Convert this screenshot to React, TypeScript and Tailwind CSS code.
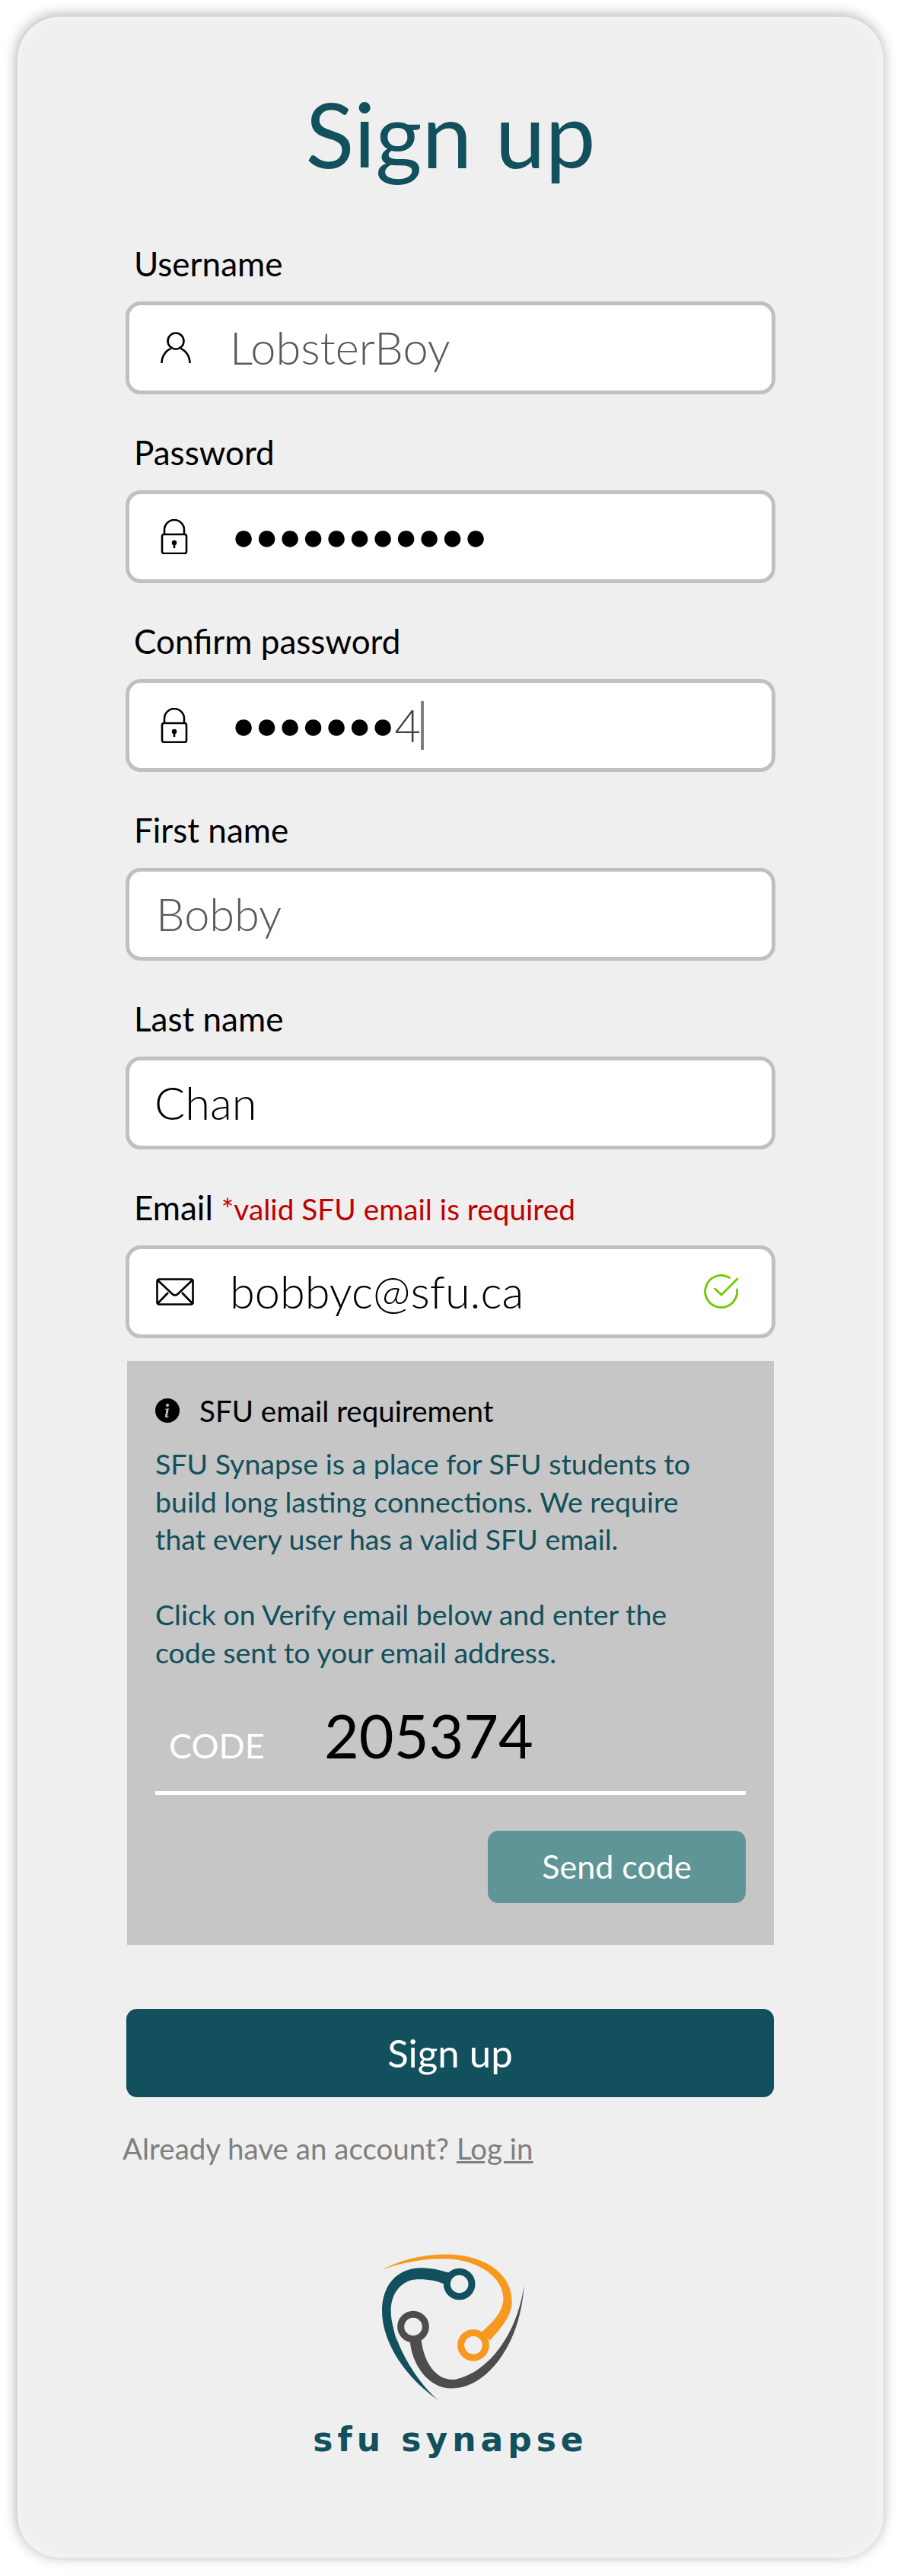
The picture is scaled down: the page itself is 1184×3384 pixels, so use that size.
import { BsInfoCircleFill } from 'react-icons/bs'
import type { ReactNode } from 'react'

function UserIcon() {
  return (
    <svg width="40" height="42" viewBox="0 0 40 42" fill="none" stroke="#000" strokeWidth="2.6">
      <circle cx="20" cy="12" r="10.5" />
      <path d="M1.5 41c0-10 7-17.500 12-19M38.500 41c0-10-7-17.500-12-19" />
    </svg>
  )
}

function LockIcon() {
  return (
    <svg width="36" height="46" viewBox="0 0 36 46" fill="none" stroke="#000" strokeWidth="2.6">
      <rect x="2" y="20" width="32" height="25" rx="2.500" />
      <path d="M5 20v-6a13 13 0 0 1 26 0v6" />
      <circle cx="18" cy="31" r="2.500" fill="#000" strokeWidth="1.500" />
      <path d="M18 33v5" />
    </svg>
  )
}

function MailIcon() {
  return (
    <svg width="50" height="36" viewBox="0 0 50 36" fill="none" stroke="#000" strokeWidth="2.6" strokeLinejoin="round">
      <rect x="1.500" y="1.500" width="47" height="33" rx="2.500" />
      <path d="M2 2.500 21.500 21q3.500 3 7 0L48 2.500M2 33.500l14-14.500M48 33.500 34 19" />
    </svg>
  )
}

function CheckIcon() {
  return (
    <svg width="46" height="46" viewBox="0 0 46 46" fill="none" stroke="#6ccb00" strokeWidth="2.8" strokeLinecap="round" strokeLinejoin="round">
      <path d="M33.500 4.500A21 21 0 1 0 43.500 20" />
      <path d="M14.500 19 23 27 44 6" />
    </svg>
  )
}

function Logo() {
  return (
    <svg width="420" height="247" viewBox="0 0 1260 740" fill="none">
      <path d="M360 200C450 150 560 135 640 140C760 148 872 210 872 325C872 380 830 430 785 478L752 445C800 405 835 365 838 320C842 240 760 172 640 158C560 150 450 165 360 200Z" fill="#f7981f" />
      <path d="M645 166C735 180 815 235 826 320C808 250 730 195 645 166Z" fill="#efefef" />
      <path d="M588 718C470 640 360 500 360 360C360 260 420 195 510 192C550 192 590 200 625 212L610 258C570 240 530 235 490 238C430 245 395 300 395 360C395 480 500 650 588 718Z" fill="#11505c" />
      <path d="M462 250C410 275 378 350 420 488C392 360 400 290 462 250Z" fill="#efefef" />
      <path d="M470 480C478 570 540 667 635 667C770 667 905 500 920 262C895 440 790 600 650 632C570 640 525 560 515 478Z" fill="#4d4d4d" />
      <path d="M580 600C650 640 740 600 808 522C740 612 650 642 580 600Z" fill="#efefef" />
      <circle cx="720" cy="497" r="49" stroke="#f7981f" strokeWidth="27" fill="#efefef" />
      <circle cx="665" cy="256" r="49" stroke="#11505c" strokeWidth="27" fill="#efefef" />
      <circle cx="483" cy="424" r="49" stroke="#4d4d4d" strokeWidth="27" fill="#efefef" />
    </svg>
  )
}

function Field({ label, hint, children }: { label: string; hint?: string; children: ReactNode }) {
  return (
    <div className="flex flex-col">
      <div className="flex h-[54px] items-baseline gap-[11px] pl-[11px] text-[44px] leading-[54px] text-black">
        <span>{label}</span>
        {hint && <span className="text-[38.800px] text-[#c00000]">{hint}</span>}
      </div>
      <div className="mt-[23px] box-border flex h-[122px] items-center rounded-[20px] border-[5px] border-[#c0c0c0] bg-white text-[59.500px] font-light">
        {children}
      </div>
    </div>
  )
}

function Dots({ count }: { count: number }) {
  return (
    <span className="font-['DejaVu_Sans',sans-serif] text-[50px] leading-none tracking-[0.300px] text-black">
      {'●'.repeat(count)}
    </span>
  )
}

export default function App() {
  return (
    <div className="min-h-[3384px] bg-white px-[23px] pt-[22px] font-['Lato',sans-serif]">
      <main className="h-[3338px] rounded-[56px] bg-[#efefef] px-[142px] shadow-[-1px_-2px_18px_rgba(0,0,0,0.32),inset_0_0_22px_rgba(255,255,255,0.45)]">
        <h1 className="pt-[84px] text-center text-[118px] leading-[140px] text-[#11505c]">Sign up</h1>

        <div className="mt-[73px] flex flex-col gap-[49px]">
          <Field label="Username">
            <span className="flex w-[132px] justify-center pr-[10px]">
              <UserIcon />
            </span>
            <span className="text-[#595959]">LobsterBoy</span>
          </Field>
          <Field label="Password">
            <span className="flex w-[135px] justify-center pr-[17px]">
              <LockIcon />
            </span>
            <Dots count={11} />
          </Field>
          <Field label="Confirm password">
            <span className="flex w-[135px] justify-center pr-[17px]">
              <LockIcon />
            </span>
            <Dots count={7} />
            <span className="text-[#404040]">4</span>
            <span className="h-[64px] w-[4px] bg-[#808080]" />
          </Field>
          <Field label="First name">
            <span className="pl-[35px] text-[#595959]">Bobby</span>
          </Field>
          <Field label="Last name">
            <span className="pl-[33px] text-black">Chan</span>
          </Field>
          <Field label="Email" hint="*valid SFU email is required">
            <span className="flex w-[132px] justify-center pr-[12px]">
              <MailIcon />
            </span>
            <span className="text-black">bobbyc@sfu.ca</span>
            <span className="ml-auto pr-[43px]">
              <CheckIcon />
            </span>
          </Field>
        </div>

        <section className="mx-[2px] mt-[30px] h-[767px] bg-[#c6c6c6] px-[37px] pt-[42px]">
          <div className="flex items-center gap-[26px] text-[38.500px] leading-[46px] text-black">
            <BsInfoCircleFill className="size-[32px]" />
            <span>SFU email requirement</span>
          </div>
          <p className="mt-[22px] text-[37.500px] leading-[49.5px] text-[#11505c]">
            SFU Synapse is a place for SFU students to
            <br />
            build long lasting connections. We require
            <br />
            that every user has a valid SFU email.
            <br />
            <br />
            Click on Verify email below and enter the
            <br />
            code sent to your email address.
          </p>
          <div className="mt-[37px] flex h-[126px] items-baseline border-b-[5px] border-white pl-[18px]">
            <span className="w-[204px] text-[45px] text-white">CODE</span>
            <span className="text-[79px] leading-[96px] text-black">205374</span>
          </div>
          <div className="mt-[47px] flex justify-end">
            <button className="h-[95px] w-[339px] rounded-[14px] bg-[#5f9596] text-[43px] text-white">Send code</button>
          </div>
        </section>

        <button className="mx-[1px] mt-[84px] h-[116px] w-[851px] rounded-[14px] bg-[#11505c] text-[51px] text-white">
          Sign up
        </button>
        <p className="mt-[42px] -ml-[4px] text-[38.500px] leading-[50px] text-[#7f7f7f]">
          Already have an account? <span className="underline">Log in</span>
        </p>

        <div className="mt-[68px] flex flex-col items-center">
          <Logo />
          <span className="mt-[18px] font-['DejaVu_Sans',sans-serif] text-[44px] leading-[50px] font-bold tracking-[6px] text-[#11505c]">
            sfu synapse
          </span>
        </div>
      </main>
    </div>
  )
}
